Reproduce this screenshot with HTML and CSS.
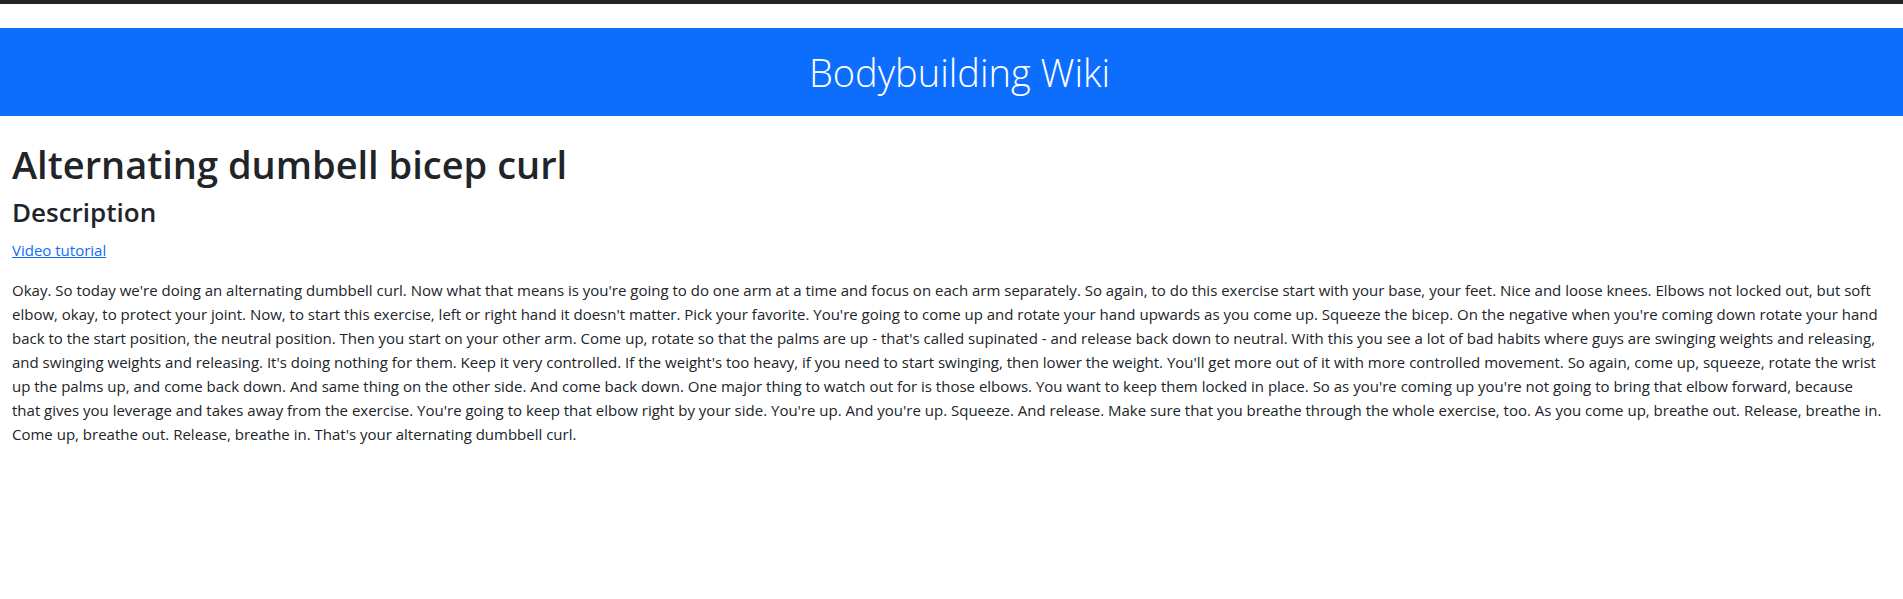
FILE: index.html
```html
<!DOCTYPE html>
<html lang="en">
<head>
<meta charset="utf-8">
<title>Bodybuilding Wiki</title>
<link rel="stylesheet" href="styles.css">
</head>
<body>
<div class="topbar"></div>
<div class="page">
  <header class="site-header">
    <h1 class="site-title">Bodybuilding Wiki</h1>
  </header>
  <main class="content">
    <h1 class="ex-title">Alternating dumbell bicep curl</h1>
    <h3 class="ex-sub">Description</h3>
    <p class="video"><a href="#">Video tutorial</a></p>
    <p class="desc">Okay. So today we're doing an alternating dumbbell curl. Now what that means is you're going to do one arm at a time and focus on each arm separately. So again, to do this exercise start with your base, your feet. Nice and loose knees. Elbows not locked out, but soft<br>elbow, okay, to protect your joint. Now, to start this exercise, left or right hand it doesn't matter. Pick your favorite. You're going to come up and rotate your hand upwards as you come up. Squeeze the bicep. On the negative when you're coming down rotate your hand<br>back to the start position, the neutral position. Then you start on your other arm. Come up, rotate so that the palms are up - that's called supinated - and release back down to neutral. With this you see a lot of bad habits where guys are swinging weights and releasing,<br>and swinging weights and releasing. It's doing nothing for them. Keep it very controlled. If the weight's too heavy, if you need to start swinging, then lower the weight. You'll get more out of it with more controlled movement. So again, come up, squeeze, rotate the wrist<br>up the palms up, and come back down. And same thing on the other side. And come back down. One major thing to watch out for is those elbows. You want to keep them locked in place. So as you're coming up you're not going to bring that elbow forward, because<br>that gives you leverage and takes away from the exercise. You're going to keep that elbow right by your side. You're up. And you're up. Squeeze. And release. Make sure that you breathe through the whole exercise, too. As you come up, breathe out. Release, breathe in.<br>Come up, breathe out. Release, breathe in. That's your alternating dumbbell curl.</p>
  </main>
</div>
</body>
</html>
```
FILE: styles.css
```css
html, body {
  margin: 0;
  padding: 0;
  overflow-x: hidden;
  background: #fff;
}
body {
  font-family: "Open Sans", "Noto Sans", sans-serif;
  color: #212529;
  font-size: 15px;
  line-height: 24px;
}
.topbar {
  height: 4px;
  background: #212529;
}
.page {
  width: calc(100% + 16px);
}
.site-header {
  margin-top: 24px;
  background: #0d6efd;
  padding: 20px 12px;
  text-align: center;
}
.site-title {
  margin: 0;
  font-weight: 300;
  font-size: 38px;
  line-height: 48px;
  color: #fff;
}
.content {
  padding: 24px 12px 0;
}
.ex-title {
  margin: 0 0 8px;
  font-size: 38px;
  font-weight: 600;
  line-height: 48px;
}
.ex-sub {
  margin: 0 0 8px;
  font-size: 26px;
  font-weight: 600;
  line-height: 33.6px;
}
.video {
  margin: 0 0 16px;
}
.video a {
  color: #0d6efd;
  text-decoration: underline;
}
.desc {
  margin: 0 0 16px;
  white-space: nowrap;
}
```
